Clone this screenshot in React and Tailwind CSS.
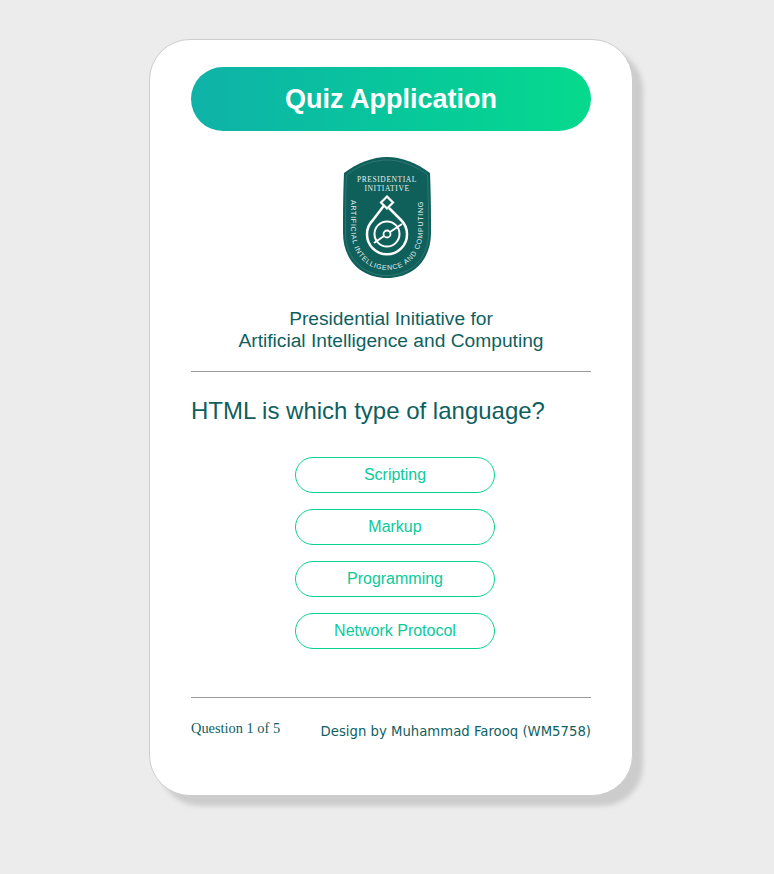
import React from 'react';

const options = ['Scripting', 'Markup', 'Programming', 'Network Protocol'];

function Logo() {
  return (
    <svg width="88" height="121" viewBox="0 0 88 121" fill="none">
      <path d="M44 0 C58 0 74 6 87 16 C88 40 88 60 88 76 C88 103 70 121 44 121 C18 121 0 103 0 76 C0 60 0 40 1 16 C14 6 30 0 44 0 Z" fill="#0f5f5a" />
      <path d="M44 3 C57 3 72 8 84.500 18 C85.500 40 85.500 60 85.500 76 C85.500 101 68 118.500 44 118.500 C20 118.500 2.500 101 2.500 76 C2.500 60 2.500 40 3.500 18 C16 8 31 3 44 3 Z" stroke="#4f8f89" strokeWidth="0.5" />
      <defs>
        <path id="arc" d="M8 43 L8 72 C8 97 24 113 44 113 C64 113 80 97 80 72 L80 43" />
      </defs>
      <text x="44" y="25" textAnchor="middle" fill="#e6f0ee" fontSize="7.500" fontFamily="'Liberation Serif', serif" letterSpacing="0.6">PRESIDENTIAL</text>
      <text x="44" y="34" textAnchor="middle" fill="#e6f0ee" fontSize="7.500" fontFamily="'Liberation Serif', serif" letterSpacing="0.6">INITIATIVE</text>
      <text fill="#e6f0ee" fontSize="7" fontFamily="'Liberation Sans', sans-serif" letterSpacing="0.75">
        <textPath href="#arc" startOffset="0">ARTIFICIAL INTELLIGENCE AND COMPUTING</textPath>
      </text>
      <path d="M44 39.500 L50 45.500 L44 51.500 L38 45.500 Z" stroke="#fff" strokeWidth="2.200" />
      <path d="M41 48.500 L30 63 A20 20 0 1 0 58 63 L46 51" stroke="#fff" strokeWidth="2.500" />
      <circle cx="44" cy="77" r="12.500" stroke="#fff" strokeWidth="2" />
      <circle cx="44" cy="77" r="3.500" stroke="#fff" strokeWidth="1.800" />
      <path d="M31 86 L41 79 M47 75 L59 67" stroke="#fff" strokeWidth="2" />
    </svg>
  );
}

export default function App() {
  return (
    <div className="min-h-[874px] bg-[#ececec] pt-[39px] pl-2 flex justify-center font-['Liberation_Sans',sans-serif]">
      <div className="w-[484px] h-[757px] bg-white border border-[#cccccc] rounded-[41px] shadow-[10px_10px_5px_#cccccc] px-[41px] pt-[27px]">
        <h1 className="h-16 rounded-full bg-gradient-to-r from-[#0fb2a8] to-[#06da8c] text-white text-[27px] font-bold flex items-center justify-center">
          Quiz Application
        </h1>
        <div className="flex justify-center mt-[26px] pr-2">
          <Logo />
        </div>
        <p className="mt-[30px] text-center text-[19.2px] leading-[22px] text-[#0f5f5f]">
          Presidential Initiative for
          <br />
          Artificial Intelligence and Computing
        </p>
        <div className="mt-[19px] border-t border-[#999999]" />
        <h2 className="mt-[25px] text-[24px] leading-[28px] text-[#0f5f5f]">HTML is which type of language?</h2>
        <div className="mt-[32px] flex flex-col gap-4 items-center pl-2">
          {options.map((option) => (
            <button
              key={option}
              className="w-[200px] h-9 rounded-[18px] border border-[#06d38f] bg-white text-[#0cc99a] text-base"
            >
              {option}
            </button>
          ))}
        </div>
        <div className="mt-12 border-t border-[#999999]" />
        <div className="mt-[22px] flex justify-between">
          <span className="font-['Liberation_Serif',serif] text-[14.4px] leading-4 text-[#0f5f5f]">Question 1 of 5</span>
          <span className="font-['DejaVu_Sans',sans-serif] text-[13.25px] leading-4 mt-1 text-[#0f5f5f] whitespace-nowrap">Design by Muhammad Farooq (WM5758)</span>
        </div>
      </div>
    </div>
  );
}
